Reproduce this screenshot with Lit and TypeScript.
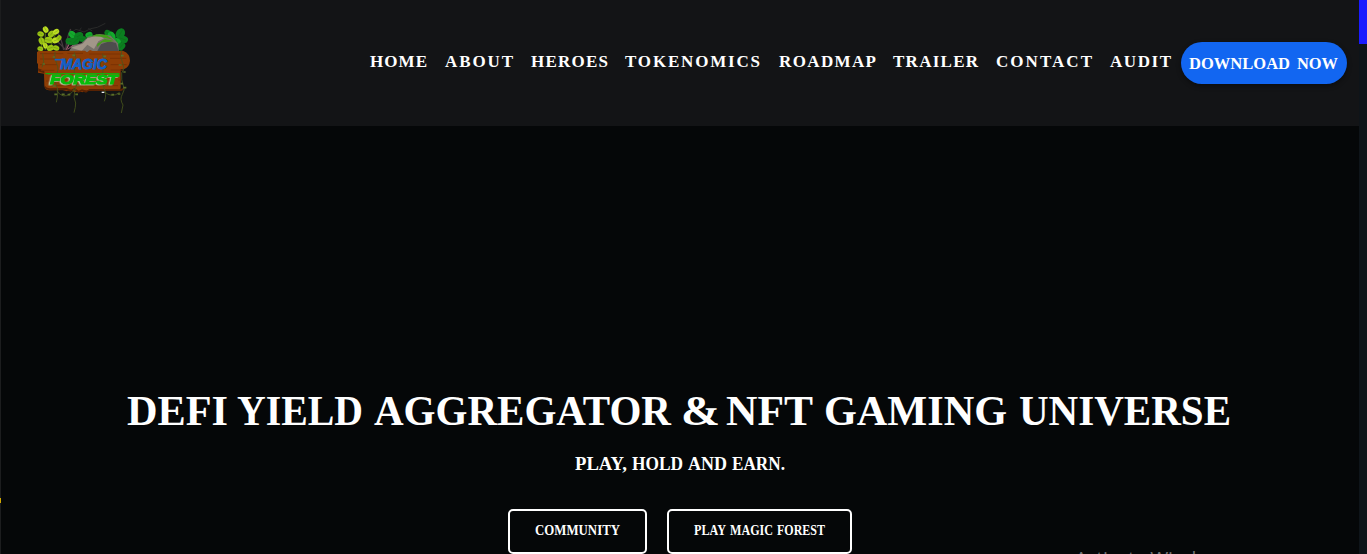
import { LitElement, html, svg, css } from "lit";
import { customElement, property } from "lit/decorators.js";

type Word = [text: string, width: number, gap: number];

/* A line of words, each one set to a fixed measure. */
@customElement("display-line")
class DisplayLine extends LitElement {
  @property({ attribute: false }) words: Word[] = [];
  @property({ type: Number }) size = 18;
  @property({ type: Boolean }) tracked = false;

  static styles = css`
    :host { display: flex; }
    svg { display: block; overflow: visible; flex: none; fill: currentColor; font-family: "Liberation Serif", serif; font-weight: 700; text-transform: uppercase; }
  `;

  render() {
    const h = Math.round(this.size);
    const base = Math.round(this.size * 0.82);
    return this.words.map(([t, w, g]) => html`
      <svg width=${w} height=${h} style="margin-right:${g}px">
        <text x="0" y=${base} font-size=${this.size} textLength=${w} lengthAdjust=${this.tracked ? "spacing" : "spacingAndGlyphs"}>${t}</text>
      </svg>`);
  }
}

@customElement("forest-logo")
class ForestLogo extends LitElement {
  static styles = css`
    :host { display: block; width: 130px; height: 110px; }
    svg { display: block; }
    .title { font-family: "Liberation Sans", sans-serif; font-weight: 700; font-style: italic; }
  `;

  leaf(x: number, y: number, r: number, a: number, c: string) {
    return svg`<g transform="translate(${x} ${y}) rotate(${a})"><ellipse rx=${r * 1.12} ry=${r * 0.88} fill=${c}/><path d="M${-r} 0H${r * 0.6}" stroke="#1c4a0a" stroke-opacity=".3" stroke-width="2"/></g>`;
  }

  render() {
    const lime = [[77, 44, 9, 60], [62, 57, 9, 20], [94, 57, 10, 130], [108, 50, 9, 150], [65, 78, 10, 70], [86, 75, 11, 10], [107, 76, 10, 160], [117, 69, 8, 120], [61, 101, 8, 20], [76, 92, 8, 80], [91, 99, 10, 160], [108, 99, 9, 20]];
    const green = [[157, 59, 11, 40], [176, 63, 13, 150], [150, 79, 12, 10], [207, 60, 10, 160], [166, 78, 12, 140], [264, 54, 10, 30], [275, 63, 12, 60], [301, 56, 15, 120], [311, 73, 12, 20], [292, 83, 13, 70], [304, 94, 12, 130], [188, 72, 10, 0]];
    return html`
      <svg width="130" height="110" viewBox="0 0 390 330" fill="none">
        <path d="M150 55l18-12 24 8 20-10 20-4 24-12M178 47l6-9M205 40l12 8" stroke="#292a29" stroke-width="3"/>
        <path d="M131 105q-6-32-18-52M137 105q2-34 15-63M139 105q8-31 25-53M137 105q-18-20-24-24" stroke="#453a3d" stroke-width="4"/>
        <path d="M139 104l17-34M143 103l22-17" stroke="#a95c75" stroke-width="3"/>
        <path d="M76 105V55M88 105l18-48M66 105l-4-40" stroke="#496311" stroke-width="4"/>
        ${green.map(([x, y, r, a], i) => this.leaf(x, y, r, a, i % 3 ? "#0b7f20" : "#13aa2d"))}
        <path d="M145 112l13-21 26-6 21-20 33-8 34 5 22 23 3 28z" fill="#77716a"/>
        <path d="M153 98l35-12 14-16 32-9 18 9-17 9-13 23-20-13-17 19z" fill="#a29689"/>
        <path d="M232 108l11-20 25-9 20 5 9 26z" fill="#4d4d4d"/>
        <path d="M204 68l25-10 29 1 23 16-20-5-19-5-23-1zM232 86l23-14 29 6-19 3-18 1-16 14z" fill="#449c18"/>
        ${lime.map(([x, y, r, a], i) => this.leaf(x, y, r, a, i % 3 ? "#9bc414" : "#bddd22"))}
        <path d="M55 108l140-1 6 5 9-7 8 3h92q20 8 20 29-2 19-17 25h-11v54q1 11-12 12l-96-1-7 5-12-4-11 4-13-8-10 5-13-4-40 1q-14-2-15-14l-1-36-18-3V148l-3-5V112z" fill="#8e3d05"/>
        <path d="M54 160l19 7v8l-18-6zM74 211q4 9 16 9l50-1 13 5 11-5 12 8 10-4 14 4 8-5 91 1q12-2 13-13v8q-1 10-13 10h-93l-8 5-12-4-11 4-13-8-10 5-13-4H89q-14-2-15-12z" fill="#572203"/>
        <path d="M60 116h70M142 115h47M208 117h97M60 132h45M270 130h49M60 149h51M272 149h48M63 166h40M272 165h39M78 198h13M295 195h7M92 212h202" stroke="#7b3204" stroke-width="3"/>
        <path d="M105 111q-4 18 5 35t-3 37q-4 18 3 31t-1 48M163 112q10 22 3 39-8 20 1 40 5 20-3 38-5 18 3 35 0 12-5 29M248 116q8 23 1 50t2 51q11 20 2 42M306 105q-8 20 1 37t-2 32q-2 22 5 38 6 12-3 26t2 32l-5 24M68 115l3 24-5 18M110 228q20 25 40 8 13-6 12-19M253 230q22 21 46 2" stroke="#48571c" stroke-width="2.5"/>
        <path d="M98 126h7M68 147h7M170 137h8M157 121h8M250 124h8M303 122h8M296 150h9M310 171h7M83 177h8M98 213h9M125 238h9M143 239h8M166 238h8M274 239h8M293 237h8M310 218h9M301 206h8M103 238h8M171 211h8M254 209h8" stroke="#5a6e28" stroke-width="5"/>
        <path d="M104 134l24 0" stroke="#1260c9" stroke-width="5"/>
        <text class="title" x="121" y="163" font-size="43" textLength="140" lengthAdjust="spacing" fill="#1260c9" stroke="#1260c9" stroke-width="2.5">MAGIC</text>
        <text class="title" x="91" y="206" font-size="40" textLength="202" lengthAdjust="spacingAndGlyphs" fill="#08bc0b" stroke="#08bc0b" stroke-width="3.5" style="filter:drop-shadow(-4px 2px 0 #b9cfb0)">FOREST</text>
        <path d="M76 176h222" stroke="#08bc0b" stroke-width="3"/>
        <path d="M245 232h8" stroke="#eee" stroke-width="4"/>
      </svg>`;
  }
}

@customElement("app-root")
class AppRoot extends LitElement {
  static styles = css`
    :host { display: block; height: 554px; overflow: hidden; background: #050708; color: #fff; }
    * { box-sizing: border-box; }
    .page { display: grid; grid-template-columns: 1359px 8px; height: 554px; position: relative; overflow: hidden; }
    .content { display: flex; flex-direction: column; border-left: 1px solid #1c1d1e; min-width: 0; }
    header { display: flex; flex: none; height: 126px; background: #131416; padding: 0 12px 0 19px; }
    forest-logo { margin-top: 15px; flex: none; }
    nav { display: flex; margin: 53px 0 0 auto; height: 18px; }
    .download { display: flex; flex: none; margin: 42px 0 0 9px; width: 166px; height: 42px; padding: 13px 8px; border-radius: 21px; background: #1266f1; box-shadow: 0 2px 5px #0006; }
    .hero { display: flex; flex-direction: column; align-items: flex-start; }
    .heading { margin: 264px 0 0 126px; height: 43px; }
    .subtitle { margin: 21px 0 0 574px; height: 19px; }
    .actions { display: flex; gap: 20px; margin: 36px 0 0 507px; }
    .button { height: 45px; border: 2px solid #fff; border-radius: 5px; padding: 13px 0 0 25px; }
    .community { width: 139px; }
    .play { width: 185px; padding-left: 24.5px; }
    .rail { background: #0e1419; }
    .thumb { height: 44px; background: #1b1bff; }
    .watermark { position: absolute; left: 1075px; top: 545px; font: 19.5px/27px "Open Sans", sans-serif; color: #747576; white-space: nowrap; letter-spacing: -0.2px; }
    .edge { position: absolute; left: 0; top: 498px; width: 1px; height: 5px; background: #d1a800; }
  `;

  nav: Word[] = [["Home", 57, 18], ["About", 68, 18], ["Heroes", 77, 17], ["Tokenomics", 135, 19], ["Roadmap", 97, 17], ["Trailer", 85, 18], ["Contact", 96, 18], ["Audit", 61, 1]];
  heading: Word[] = [["DeFi", 101, 9], ["Yield", 126, 11], ["Aggregator", 297, 10], ["&", 39, 6], ["NFT", 87, 11], ["Gaming", 183, 12], ["Universe", 212, 0]];
  subtitle: Word[] = [["PLAY,", 52, 5], ["HOLD", 51, 5], ["AND", 39, 5], ["EARN.", 53, 0]];

  render() {
    return html`
      <div class="page">
        <div class="content">
          <header>
            <forest-logo></forest-logo>
            <nav><display-line tracked .words=${this.nav} .size=${17}></display-line></nav>
            <div class="download"><display-line .words=${[["DOWNLOAD", 101, 7], ["NOW", 41, 0]]} .size=${17.5}></display-line></div>
          </header>
          <main class="hero">
            <display-line class="heading" .words=${this.heading} .size=${43}></display-line>
            <display-line class="subtitle" .words=${this.subtitle} .size=${19}></display-line>
            <div class="actions">
              <div class="button community"><display-line .words=${[["COMMUNITY", 85, 0]]} .size=${14}></display-line></div>
              <div class="button play"><display-line .words=${[["PLAY", 32, 4], ["MAGIC", 43, 4], ["FOREST", 48, 0]]} .size=${14}></display-line></div>
            </div>
          </main>
        </div>
        <div class="rail"><div class="thumb"></div></div>
        <div class="edge"></div>
        <div class="watermark">Activate Windows</div>
      </div>`;
  }
}
